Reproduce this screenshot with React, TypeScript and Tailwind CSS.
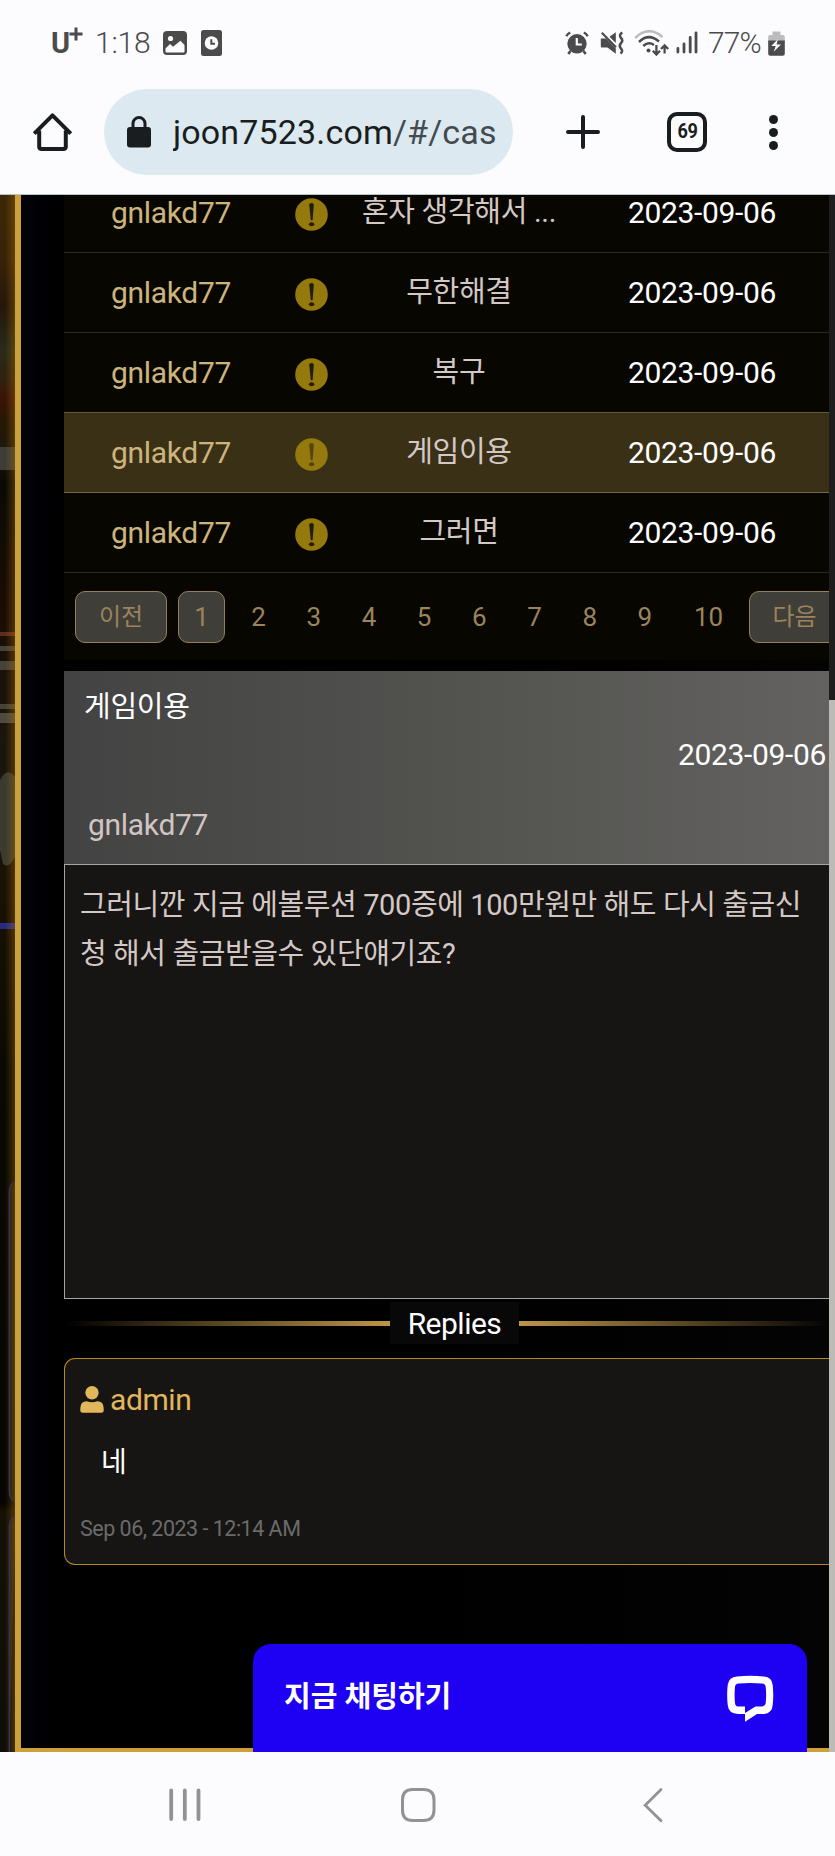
import type { ReactNode } from 'react';

const rows = [
  { user: 'gnlakd77', title: '혼자 생각해서 ...', date: '2023-09-06' },
  { user: 'gnlakd77', title: '무한해결', date: '2023-09-06' },
  { user: 'gnlakd77', title: '복구', date: '2023-09-06' },
  { user: 'gnlakd77', title: '게임이용', date: '2023-09-06', active: true },
  { user: 'gnlakd77', title: '그러면', date: '2023-09-06' },
];

function StatusBar() {
  return (
    <div className="flex h-[84px] items-center pl-[51px] text-[#4b4b4b]">
      <div className="flex w-[44px] items-start leading-none">
        <span className="mt-[2px] text-[29px] font-bold leading-[30px]">U</span>
        <svg className="-ml-px mt-[1px] h-[14px] w-[14px]" viewBox="0 0 14 14">
          <path d="M7 0.5V13.5M0.5 7H13.5" stroke="currentColor" strokeWidth="3" />
        </svg>
      </div>
      <span className="w-[68px] text-[30px] font-light tracking-[-0.2px]">1:18</span>
      <svg className="mt-[2px] h-[24px] w-[24px]" viewBox="0 0 24 24">
        <rect width="24" height="24" rx="4" fill="currentColor" />
        <circle cx="7.5" cy="7.5" r="2.6" fill="#fcfcfe" />
        <path d="M2.5 17.5L7 13l3 2.8L17.5 9.8l4 4.2v6.5q0 1-1 1h-17q-1 0-1-1z" fill="#fcfcfe" />
      </svg>
      <svg className="ml-[14px] mt-[2px] h-[26px] w-[21px]" viewBox="0 0 21 26">
        <rect width="21" height="26" rx="2.5" fill="currentColor" />
        <circle cx="10.5" cy="13" r="6.8" fill="#fcfcfe" />
        <path d="M10.3 9.2V13.7H14" fill="none" stroke="currentColor" strokeWidth="2" />
      </svg>
      <svg className="ml-[343px] mt-[1px] h-[24px] w-[24px]" viewBox="0 0 24 24">
        <circle cx="12" cy="12.8" r="9.7" fill="currentColor" />
        <path d="M1.3 5.2Q2.6 2.8 5.2 1.5M22.7 5.2Q21.4 2.8 18.8 1.5" fill="none" stroke="currentColor" strokeWidth="2.4" />
        <path d="M5.5 20L3.3 23M18.5 20l2.2 3" stroke="currentColor" strokeWidth="2.6" />
        <path d="M11.8 7V13.5H16.8" fill="none" stroke="#fcfcfe" strokeWidth="2.2" />
      </svg>
      <svg className="ml-[11px] mt-[1px] h-[24px] w-[24px]" viewBox="0 0 24 24">
        <path d="M0.8 7.5H6L15.8 17.5V22.8L7.5 16.5H2.2Q0.8 16.5 0.8 15zM9.5 5.8L15.8 1.2V12z" fill="currentColor" />
        <path d="M1.8 1.8L16 16.2" stroke="currentColor" strokeWidth="2.2" />
        <path d="M22.3 1.5Q18.5 4 21 6.8T21 12.2T21 17.6T20.5 22.5" fill="none" stroke="currentColor" strokeWidth="2.5" />
      </svg>
      <svg className="ml-[10px] mt-[1px] h-[26px] w-[35px]" viewBox="0 0 35 26">
        <path d="M1.2 8Q14.3 -5 28.5 7" fill="none" stroke="#bcbcbe" strokeWidth="2.5" />
        <path d="M5 12Q14.5 2.5 25 11.5M9.3 16Q14.5 11 20 15" fill="none" stroke="currentColor" strokeWidth="2.5" />
        <circle cx="14.5" cy="20.5" r="2" fill="currentColor" />
        <path d="M22.4 15v9M18.8 20.8l3.6 3.7 3.6-3.7M30.6 23.5V16M27 19l3.6-3.7 3.6 3.7" fill="none" stroke="currentColor" strokeWidth="2.3" />
      </svg>
      <svg className="ml-[7px] mt-[1px] h-[23px] w-[22px]" viewBox="0 0 22 23">
        <path d="M1.9 21v-3.5M8 21v-8M14.2 21V6.5M20 21V1.8" stroke="currentColor" strokeWidth="2.8" strokeLinecap="round" />
      </svg>
      <span className="ml-[10px] w-[60px] text-[30px] font-light tracking-[-0.9px]">77%</span>
      <svg className="mt-[2px] h-[25px] w-[17px]" viewBox="0 0 17 25">
        <path d="M4.5 0.5h8V4H15q1.8 0 1.8 1.8V12H0.2V5.8Q0.2 4 2 4h2.5z" fill="#bcbcbe" />
        <path d="M0.2 9.5H16.8V22.8q0 2-2 2H2.2q-2 0-2-2z" fill="currentColor" />
        <path d="M9.8 8.2L3.3 15h4.4l-2 5.8L13 13.5H8.6z" fill="#fcfcfe" />
      </svg>
    </div>
  );
}

function AddressBar() {
  return (
    <div className="flex h-[96px] items-center pl-[32px] text-[#191d20]">
      <svg className="h-[42px] w-[42px] shrink-0" viewBox="0 0 42 42">
        <path d="M7.2 19.5V35.6Q7.2 38 9.6 38H31.4Q33.8 38 33.8 35.6V19.5M2.2 22.7L20.5 4.3L38.8 22.7" fill="none" stroke="currentColor" strokeWidth="4" strokeLinejoin="round" />
      </svg>
      <div className="ml-[30px] flex h-[86px] w-[409px] items-center rounded-full bg-[#dce9f1] pl-[23px]">
        <svg className="h-[32px] w-[24px] shrink-0" viewBox="0 0 24 32">
          <rect y="11" width="24" height="20.5" rx="3" fill="currentColor" />
          <path d="M6 12V7.5a6 6 0 0 1 12 0V12" fill="none" stroke="currentColor" strokeWidth="3" />
        </svg>
        <div className="ml-[22px] w-[323px] overflow-hidden whitespace-nowrap text-[34px] leading-[44px] tracking-[0.15px]">
          joon7523.com<span className="text-[#444b50]">/#/cas</span>
        </div>
      </div>
      <svg className="ml-[53px] h-[34px] w-[34px] shrink-0" viewBox="0 0 34 34">
        <path d="M17 2V32M2 17H32" stroke="currentColor" strokeWidth="4" strokeLinecap="round" />
      </svg>
      <div className="ml-[67px] flex h-[40px] w-[40px] items-center justify-center rounded-[10px] border-4 border-[#191d20] text-[21px] font-bold tracking-[-0.6px]">
        <span className="scale-x-[0.86]">69</span>
      </div>
      <div className="ml-[62px] flex flex-col gap-1">
        <i className="h-[9px] w-[9px] rounded-full bg-[#191d20]" />
        <i className="h-[9px] w-[9px] rounded-full bg-[#191d20]" />
        <i className="h-[9px] w-[9px] rounded-full bg-[#191d20]" />
      </div>
    </div>
  );
}

function Backdrop() {
  return (
    <svg className="h-[1557px] w-[15px] shrink-0" viewBox="0 0 15 1557" preserveAspectRatio="none">
      <defs>
        <linearGradient id="photo" x1="0" y1="0" x2="0" y2="1">
          <stop offset="0" stopColor="#3a2708" />
          <stop offset="0.04" stopColor="#382309" />
          <stop offset="0.07" stopColor="#25170a" />
          <stop offset="0.1" stopColor="#292a1b" />
          <stop offset="0.12" stopColor="#32200d" />
          <stop offset="0.13" stopColor="#3c1308" />
          <stop offset="0.145" stopColor="#251705" />
          <stop offset="0.16" stopColor="#21180b" />
          <stop offset="0.185" stopColor="#0b0905" />
          <stop offset="0.26" stopColor="#1a0c05" />
          <stop offset="0.35" stopColor="#1a150d" />
          <stop offset="0.45" stopColor="#1a1106" />
          <stop offset="0.56" stopColor="#0b0902" />
          <stop offset="0.84" stopColor="#060500" />
          <stop offset="0.845" stopColor="#151105" />
          <stop offset="1" stopColor="#0e0d08" />
        </linearGradient>
        <linearGradient id="glow">
          <stop offset="0.35" stopColor="#b07800" stopOpacity="0" />
          <stop offset="1" stopColor="#b07800" stopOpacity="0.35" />
        </linearGradient>
      </defs>
      <rect width="15" height="1557" fill="url(#photo)" />
      <path d="M0 252h15v23H0z" fill="#3d3c38" />
      <path d="M0 437h15v4H0z" fill="#612a20" />
      <path d="M0 451h15v5H0zM0 466h15v9H0zM0 509h15v5H0z" fill="#45423a" />
      <path d="M0 518h15v10H0z" fill="#4e4a42" />
      <path d="M0 585q7-14 15-3v80q-6 12-12 7l-3-14z" fill="#3a3a30" />
      <path d="M0 728h15v6H0z" fill="#292a86" />
      <rect width="15" height="1557" fill="url(#glow)" />
      <path d="M15.5 986Q9.3 989 9.3 997V1296Q9.3 1304 15.5 1308M15.5 1320Q9.3 1324 9.3 1332V1557" fill="#c8b070" fillOpacity="0.1" stroke="#37305a" strokeWidth="1.5" />
    </svg>
  );
}

function NoticeMark({ dim }: { dim?: boolean }) {
  return (
    <svg className="mt-[3px] h-[33px] w-[33px]" viewBox="0 0 33 33">
      <circle cx="16.5" cy="16.5" r="16.3" fill="#94790f" />
      <path d="M14.2 6.8Q14.2 5 16.5 5T18.8 6.8L17.6 22.3H15.8z" fill={dim ? '#54450f' : '#241d02'} />
      <ellipse cx="16.6" cy="26.3" rx="2.7" ry="2" fill={dim ? '#54450f' : '#241d02'} />
    </svg>
  );
}

function MessageTable() {
  return (
    <div className="flex h-[378px] flex-col justify-end overflow-hidden bg-[#070600]">
      {rows.map((r, i) => (
        <div
          key={i}
          className={`flex h-[80px] shrink-0 items-center border-b text-center text-[30px] ${
            r.active ? 'border-[#756840] bg-[#3a3016]' : i === 2 ? 'border-[#655a38]' : 'border-[#292929]'
          }`}
        >
          <span className="w-[214px] shrink-0 tracking-[-0.3px] text-[#cdb47c]">{r.user}</span>
          <span className="flex w-[67px] shrink-0 justify-center">
            <NoticeMark dim={r.active} />
          </span>
          <span className="w-[228px] shrink-0 text-[29px] tracking-[-0.3px] text-[#d4c8c6]">{r.title}</span>
          <span className="w-[258px] shrink-0 tracking-[-0.35px] text-white">{r.date}</span>
        </div>
      ))}
    </div>
  );
}

function PageButton({ children, className }: { children: ReactNode; className: string }) {
  return (
    <button className={`flex h-[52px] shrink-0 items-center justify-center rounded-[10px] border-[1.5px] border-[#95805a] bg-[#403e38] ${className}`}>
      {children}
    </button>
  );
}

function Pagination() {
  return (
    <div className="flex h-[87px] items-start overflow-hidden bg-[#070600] pl-[11px] pt-[18px] text-[26px] text-[#9b835c]">
      <PageButton className="w-[92px] text-[24px]">이전</PageButton>
      <PageButton className="ml-[11px] w-[47px]">1</PageButton>
      <div className="ml-[6px] flex h-[52px] shrink-0 items-center text-center">
        {[2, 3, 4, 5, 6, 7, 8, 9].map((n) => (
          <span key={n} className="w-[55.2px]">{n}</span>
        ))}
        <span className="w-[72px]">10</span>
      </div>
      <PageButton className="ml-[4px] w-[92px] text-[24px]">다음</PageButton>
    </div>
  );
}

function Message() {
  return (
    <article className="mt-[11px]">
      <header className="h-[193px] bg-linear-to-r from-[#434343] via-[#52524f] to-[#636260] pt-[14px]">
        <h2 className="pl-[20px] text-[29px] leading-[44px] tracking-[-0.3px] text-white">게임이용</h2>
        <div className="mt-[4px] pr-[3px] text-right text-[30px] leading-[44px] tracking-[-0.35px] text-white">2023-09-06</div>
        <div className="mt-[26px] pl-[24px] text-[30px] leading-[44px] tracking-[-0.3px] text-[#d0c5c3]">gnlakd77</div>
      </header>
      <div className="h-[435px] border-y-[1.5px] border-l-[1.5px] border-[#a5a5a5] bg-[#161513] pl-[15px] pt-[16px] text-[29px] leading-[49px] tracking-[-0.4px] text-[#d4c8c6]">
        <p className="whitespace-nowrap">그러니깐 지금 에볼루션 700증에 100만원만 해도 다시 출금신</p>
        <p className="whitespace-nowrap">청 해서 출금받을수 있단얘기죠?</p>
      </div>
    </article>
  );
}

function Replies() {
  return (
    <section>
      <div className="mt-[3px] flex h-[42px] items-center">
        <div className="h-[5px] w-[326px] bg-linear-to-r from-transparent to-[#bd9546]" />
        <div className="flex h-[42px] w-[129px] items-center justify-center bg-[#080808] text-[30px] tracking-[-0.5px] text-white">Replies</div>
        <div className="h-[5px] flex-1 bg-linear-to-r from-[#bd9546] to-transparent" />
      </div>
      <div className="mt-[14px] h-[207px] rounded-l-[11px] border-y-[1.5px] border-l-[1.5px] border-[#b48a1c] bg-[#161513] pl-[15px] pt-[18px]">
        <div className="flex h-[44px] items-center text-[30px] tracking-[-0.4px] text-[#e2b65b]">
          <svg className="mr-[6px] h-[27px] w-[24px]" viewBox="0 0 24 27">
            <circle cx="12" cy="6.8" r="6.7" fill="currentColor" />
            <path d="M0.3 22.5Q0.3 15.3 6.8 15.3Q12 17.2 17.2 15.3Q23.7 15.3 23.7 22.5V24.2Q23.7 26.7 21.2 26.7H2.8Q0.3 26.7 0.3 24.2z" fill="currentColor" />
          </svg>
          admin
        </div>
        <p className="mt-[20px] pl-[21px] text-[28px] leading-[44px] text-white">네</p>
        <time className="mt-[24px] block text-[21.5px] leading-[40px] tracking-[-0.5px] text-[#6b6b6a]">Sep 06, 2023 - 12:14 AM</time>
      </div>
    </section>
  );
}

function ChatLauncher() {
  return (
    <div className="absolute bottom-0 left-[253px] flex h-[108px] w-[554px] items-center justify-between rounded-t-[18px] bg-[#1e00f2] pl-[31px] pr-[33px] text-white">
      <span className="text-[29px] font-bold">지금 채팅하기</span>
      <svg className="h-[48px] w-[48px]" viewBox="0 0 48 48">
        <path fillRule="evenodd" d="M11 2.6Q24.5 1 38 2.6Q46 3.2 46.7 11Q47.8 21 46.7 31Q46 39.4 38 40H31L19 47.8V40H12Q2.6 39.8 1.7 31Q.6 21 1.7 11Q2.6 3.3 11 2.6ZM12.5 9.5Q9.3 9.8 9 13Q8.2 21 9 29Q9.3 32.3 12 32.4H19V39L29.5 32.4H36Q39.4 32 39.7 29Q40.6 21 39.7 13Q39.4 9.8 36 9.5Q24.5 8.5 12.5 9.5Z" fill="currentColor" />
      </svg>
    </div>
  );
}

function NavigationBar() {
  return (
    <nav className="flex h-[104px] items-start bg-[#fcfcfe] text-[#929294]">
      <svg className="ml-[169px] mt-[36px] h-[34px] w-[32px]" viewBox="0 0 32 34">
        <path d="M2.2 2.5V31M15.8 2.5V31M29.5 2.5V31" stroke="currentColor" strokeWidth="3.8" strokeLinecap="round" />
      </svg>
      <svg className="ml-[199px] mt-[35px] h-[36px] w-[36px]" viewBox="0 0 36 36">
        <path d="M12.5 2.5H23.5Q34 2.5 34 13V23Q34 33.5 23.5 33.5H12.5Q2.5 33.5 2.5 23V13Q2.5 2.5 12.5 2.5z" fill="none" stroke="currentColor" strokeWidth="3" />
      </svg>
      <svg className="ml-[206px] mt-[35px] h-[36px] w-[22px]" viewBox="0 0 22 36">
        <path d="M19 2.5L3.2 18.2L19 33.8" fill="none" stroke="currentColor" strokeWidth="2.8" strokeLinecap="round" />
      </svg>
    </nav>
  );
}

export default function App() {
  return (
    <div className="h-[1856px] w-[835px] overflow-hidden bg-black font-[Roboto,'Noto_Sans_CJK_KR',sans-serif]">
      <header className="h-[195px] border-b border-[#b9c4c8] bg-[#fcfcfe]">
        <StatusBar />
        <AddressBar />
      </header>
      <main className="relative flex h-[1557px] overflow-hidden bg-black">
        <Backdrop />
        <div className="min-w-0 flex-1 border-b-4 border-l-[6px] border-[#cda03a] bg-linear-to-r from-[#02020a] via-black via-10% to-[#040404] pl-[43px]">
          <MessageTable />
          <Pagination />
          <Message />
          <Replies />
        </div>
        <aside className="flex w-[6px] shrink-0 flex-col bg-[#1e1e1e] pt-[505px]">
          <div className="flex-1 bg-[#bdbbb5]" />
        </aside>
        <ChatLauncher />
      </main>
      <NavigationBar />
    </div>
  );
}
